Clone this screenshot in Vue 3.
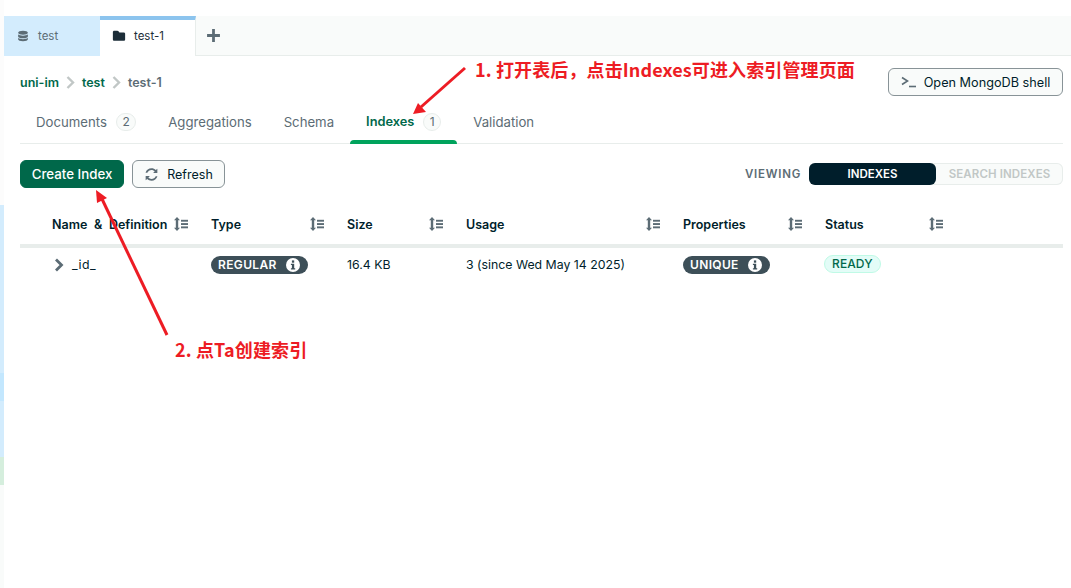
<template>
  <div class="page">
    <!-- sliver of the sidebar that stays visible on the left -->
    <aside class="strip">
      <div class="strip-blank"></div>
      <div class="strip-blue"></div>
      <div class="strip-active"></div>
      <div class="strip-blue2"></div>
      <div class="strip-green"></div>
    </aside>

    <main class="main">
      <div class="tabbar">
        <div class="wtab wtab-db">
          <svg class="wtab-icon" width="12" height="12" viewBox="0 0 16 16" fill="#5c6c75">
            <path d="M8 1C4.3 1 1.5 2 1.5 3.6S4.3 6.2 8 6.2s6.500-1 6.500-2.600S11.700 1 8 1z" />
            <path d="M1.500 5.600v3C1.500 10 4.300 11 8 11s6.500-1 6.500-2.400v-3C13.300 6.900 10.800 7.500 8 7.500S2.700 6.900 1.500 5.600z" />
            <path d="M1.500 10.400v2C1.500 14 4.300 15 8 15s6.500-1 6.500-2.600v-2C13.300 11.700 10.800 12.300 8 12.300s-5.300-.6-6.500-1.900z" />
          </svg>
          <span>test</span>
        </div>
        <div class="wtab wtab-active">
          <svg class="wtab-icon" width="14" height="14" viewBox="0 0 16 16" fill="#1c2d38">
            <path d="M1 3.500C1 2.700 1.700 2 2.500 2h3.700c.5 0 .9.200 1.200.6L8.500 4h5c.8 0 1.500.7 1.500 1.500v6.500c0 .8-.7 1.500-1.500 1.500h-11C1.700 13.500 1 12.800 1 12z" />
          </svg>
          <span>test-1</span>
        </div>
        <svg class="plus" width="15" height="15" viewBox="0 0 14 14" fill="#5c6c75">
          <path d="M5.700 1h2.600v4.700H13v2.600H8.300V13H5.700V8.300H1V5.700h4.700z" />
        </svg>
      </div>

      <div class="content">
        <div class="crumb-row">
          <div class="crumbs">
            <span class="crumb-link">uni-im</span>
            <svg width="11" height="13" viewBox="0 0 11 13"><path d="M2.500 1l5.500 5.500-5.500 5.500" fill="none" stroke="#c1c7c6" stroke-width="2.400" /></svg>
            <span class="crumb-link">test</span>
            <svg width="11" height="13" viewBox="0 0 11 13"><path d="M2.500 1l5.500 5.500-5.500 5.500" fill="none" stroke="#c1c7c6" stroke-width="2.400" /></svg>
            <span class="crumb-last">test-1</span>
          </div>
          <button class="btn shell-btn">
            <svg width="16" height="12" viewBox="0 0 16 12" fill="none" stroke="#5c6c75" stroke-width="1.600">
              <path d="M1 1.500L6.500 5 1 8.500" />
              <path d="M8 10.500h7" />
            </svg>
            <span>Open MongoDB shell</span>
          </button>
        </div>

        <nav class="tabs">
          <div v-for="tab in tabs" :key="tab.name" class="tab" :class="{ active: tab.active }">
            <span>{{ tab.name }}</span>
            <span v-if="tab.count" class="count">{{ tab.count }}</span>
          </div>
        </nav>

        <div class="toolbar">
          <button class="btn create-btn">Create Index</button>
          <button class="btn refresh-btn">
            <svg width="15" height="13" viewBox="0 0 16 14" fill="#5c6c75">
              <path d="M8 2.200c-2 0-3.700 1.200-4.500 3H1.600C2.400 2.300 5 .4 8 .4c1.800 0 3.400.7 4.600 1.800L14.300.8v4.700H9.700l1.700-1.800C10.500 2.800 9.300 2.200 8 2.200z" />
              <path d="M8 11.800c2 0 3.700-1.200 4.500-3h1.900c-.8 2.900-3.400 4.800-6.400 4.800-1.800 0-3.400-.7-4.600-1.800L1.700 13.200V8.500h4.600l-1.700 1.800c.9.900 2.100 1.500 3.400 1.500z" />
            </svg>
            <span>Refresh</span>
          </button>
          <div class="viewing">
            <span class="viewing-label">VIEWING</span>
            <div class="segment">
              <span class="seg seg-on">INDEXES</span>
              <span class="seg seg-off">SEARCH INDEXES</span>
            </div>
          </div>
        </div>

        <div class="grid grid-head">
          <div v-for="col in columns" :key="col" class="th">
            <span>{{ col }}</span>
            <svg class="sort" width="14" height="14" viewBox="0 0 14 14" fill="#5c6c75">
              <path d="M3 0l3 3.200H4.200v7.600H6L3 14 0 10.800h1.800V3.200H0z" />
              <rect x="7" y="2.800" width="7" height="1.900" />
              <rect x="7" y="6.100" width="7" height="1.900" />
              <rect x="7" y="9.400" width="7" height="1.900" />
            </svg>
          </div>
        </div>

        <div class="grid grid-row">
          <div class="td td-name">
            <svg width="10" height="14" viewBox="0 0 10 14"><path d="M2 1.500L7.500 7 2 12.500" fill="none" stroke="#5c6c75" stroke-width="2.800" /></svg>
            <span>_id_</span>
          </div>
          <div class="td">
            <span class="pill">
              REGULAR
              <svg width="14" height="14" viewBox="0 0 14 14"><circle cx="7" cy="7" r="7" fill="#fff" /><rect x="5.900" y="2.400" width="2.300" height="2.300" fill="#3d4f58" /><path d="M4.900 5.800h3.300v4.400h1v1.300H4.900v-1.300h1V7.100h-1z" fill="#3d4f58" /></svg>
            </span>
          </div>
          <div class="td">16.4 KB</div>
          <div class="td">3 (since Wed May 14 2025)</div>
          <div class="td">
            <span class="pill">
              UNIQUE
              <svg width="14" height="14" viewBox="0 0 14 14"><circle cx="7" cy="7" r="7" fill="#fff" /><rect x="5.900" y="2.400" width="2.300" height="2.300" fill="#3d4f58" /><path d="M4.900 5.800h3.300v4.400h1v1.300H4.900v-1.300h1V7.100h-1z" fill="#3d4f58" /></svg>
            </span>
          </div>
          <div class="td"><span class="ready">READY</span></div>
        </div>
      </div>
    </main>

    <!-- red annotations drawn on top of the screenshot -->
    <span class="note note-1">1. 打开表后，点击Indexes可进入索引管理页面</span>
    <span class="note note-2">2. 点Ta创建索引</span>
    <svg class="arrows" width="1071" height="588" viewBox="0 0 1071 588">
      <path d="M465 68L421 107" stroke="#ed1c24" stroke-width="3" fill="none" />
      <path d="M413 114L418 103L426 112z" fill="#ed1c24" />
      <path d="M167 335L102 199" stroke="#ed1c24" stroke-width="3" fill="none" />
      <path d="M96 190L107 198L97 203z" fill="#ed1c24" />
    </svg>
  </div>
</template>

<script setup>
const tabs = [
  { name: 'Documents', count: 2 },
  { name: 'Aggregations' },
  { name: 'Schema' },
  { name: 'Indexes', count: 1, active: true },
  { name: 'Validation' }
]

const columns = ['Name & Definition', 'Type', 'Size', 'Usage', 'Properties', 'Status']
</script>

<style>
html, body {
  margin: 0;
  background: #fff;
}
</style>

<style scoped>
.page {
  position: relative;
  display: flex;
  width: 1071px;
  height: 588px;
  overflow: hidden;
  font-family: Inter, "Noto Sans", sans-serif;
  font-size: 12.500px;
  color: #001e2b;
}

.strip {
  display: flex;
  flex-direction: column;
  flex: 0 0 4px;
  background: #f9fbfa;
}
.strip-blank { height: 205px; background: #fcfcfc; }
.strip-blue { height: 168px; background: #d3ecfd; }
.strip-active { height: 28px; background: #c3e7fe; }
.strip-blue2 { height: 56px; background: #d3ecfd; }
.strip-green { height: 28px; background: #d5eedd; }

.main {
  flex: 1;
  display: flex;
  flex-direction: column;
  padding-top: 16px;
  min-width: 0;
}

.tabbar {
  display: flex;
  align-items: center;
  height: 40px;
  box-sizing: border-box;
  background: #f9fbfa;
  border-bottom: 1px solid #e8edeb;
}
.wtab {
  display: flex;
  align-items: center;
  width: 96px;
  height: 40px;
  box-sizing: border-box;
  font-size: 11.500px;
}
.wtab-db {
  background: #d3ecfd;
  color: #5c6c75;
  padding-left: 13px;
  gap: 9px;
}
.wtab-active {
  background: #fff;
  border-top: 4px solid #8cc4ee;
  border-right: 1px solid #e8edeb;
  color: #1c2d38;
  padding: 0 0 3px 12px;
  gap: 8px;
}
.plus { margin-left: 10px; }

.content {
  padding: 0 8px 0 16px;
}

.crumb-row {
  display: flex;
  justify-content: space-between;
  align-items: flex-start;
  height: 44px;
  box-sizing: border-box;
  padding-top: 12px;
}
.crumbs {
  display: flex;
  align-items: center;
  gap: 6px;
  height: 28px;
  font-weight: 600;
  font-size: 12.500px;
}
.crumb-link { color: #00684a; }
.crumb-last { color: #5c6c75; }

.btn {
  display: flex;
  align-items: center;
  justify-content: center;
  box-sizing: border-box;
  height: 28px;
  border-radius: 6px;
  border: 1px solid #889397;
  background: #f9fbfa;
  font: inherit;
  color: #001e2b;
  padding: 0;
}
.shell-btn {
  width: 175px;
  gap: 7px;
  font-size: 12.700px;
}

.tabs {
  display: flex;
  height: 44px;
  box-sizing: border-box;
  border-bottom: 1px solid #e8edeb;
}
.tab {
  position: relative;
  display: flex;
  align-items: center;
  gap: 9px;
  padding: 0 16px;
  color: #5c6c75;
  font-size: 13.200px;
}
.tab.active {
  color: #00684a;
  font-size: 12.800px;
  font-weight: 600;
}
.tab.active::after {
  content: "";
  position: absolute;
  left: 0;
  right: 0;
  bottom: -1px;
  height: 4px;
  border-radius: 4px 4px 0 0;
  background: #00a35c;
}
.count {
  display: flex;
  align-items: center;
  justify-content: center;
  box-sizing: border-box;
  height: 18px;
  padding: 0 5.500px;
  border-radius: 9px;
  background: #f9fbfa;
  border: 1px solid #e8edeb;
  font-size: 12px;
  font-weight: 400;
  color: #5c6c75;
}

.toolbar {
  display: flex;
  align-items: center;
  gap: 8px;
  margin-top: 16px;
  height: 28px;
}
.create-btn {
  width: 104px;
  background: #00684a;
  border-color: #00684a;
  color: #fff;
  font-size: 13.300px;
  font-weight: 500;
}
.refresh-btn {
  width: 93px;
  gap: 8px;
}
.viewing {
  display: flex;
  align-items: center;
  gap: 8px;
  margin-left: auto;
}
.viewing-label {
  font-size: 11.500px;
  font-weight: 600;
  letter-spacing: 0.75px;
  color: #5c6c75;
}
.segment {
  display: flex;
  width: 254px;
  height: 22px;
  box-sizing: border-box;
  border-radius: 6px;
  background: #f9fbfa;
  box-shadow: inset 0 0 0 1px #e8edeb;
  font-size: 11.500px;
  font-weight: 600;
}
.seg {
  display: flex;
  align-items: center;
  justify-content: center;
}
.seg-on {
  width: 127px;
  background: #001e2b;
  color: #fff;
  border-radius: 6px;
}
.seg-off {
  flex: 1;
  color: #c1c7c6;
  letter-spacing: 0.1px;
}

.grid {
  display: grid;
  grid-template-columns: 159px 136px 119px 217px 142px 141px;
  padding-left: 32px;
}
.grid-head {
  margin-top: 16px;
  height: 40px;
  border-bottom: 4px solid #e8edeb;
}
.th {
  display: flex;
  align-items: center;
  justify-content: space-between;
  padding-right: 23px;
  font-weight: 600;
  word-spacing: 3.500px;
}
.sort { flex: none; }
.grid-row {
  height: 33px;
  align-items: center;
  font-size: 12.300px;
}
.td {
  display: flex;
  align-items: center;
}
.td-name {
  gap: 8px;
  padding-left: 2px;
  letter-spacing: 0.5px;
}
.pill {
  display: inline-flex;
  align-items: center;
  gap: 9px;
  height: 18px;
  padding: 0 8px 0 7px;
  border-radius: 9px;
  background: #3d4f58;
  color: #fff;
  font-size: 12px;
  font-weight: 600;
  letter-spacing: 0.35px;
}
.ready {
  display: inline-flex;
  align-items: center;
  box-sizing: border-box;
  height: 18px;
  margin: 0 0 2px -1px;
  padding: 0 7px;
  border-radius: 9px;
  background: #e3fcf7;
  border: 1px solid #c0fae6;
  color: #00684a;
  font-size: 12px;
  font-weight: 500;
  letter-spacing: 0.1px;
}

.note {
  position: absolute;
  font-family: "Noto Sans CJK SC", sans-serif;
  font-size: 18px;
  font-weight: 700;
  line-height: 24px;
  letter-spacing: 0.12px;
  color: #ed1c24;
  white-space: nowrap;
}
.note-1 { left: 475px; top: 57px; }
.note-2 { left: 175px; top: 337px; }
.arrows {
  position: absolute;
  left: 0;
  top: 0;
  pointer-events: none;
}
</style>
